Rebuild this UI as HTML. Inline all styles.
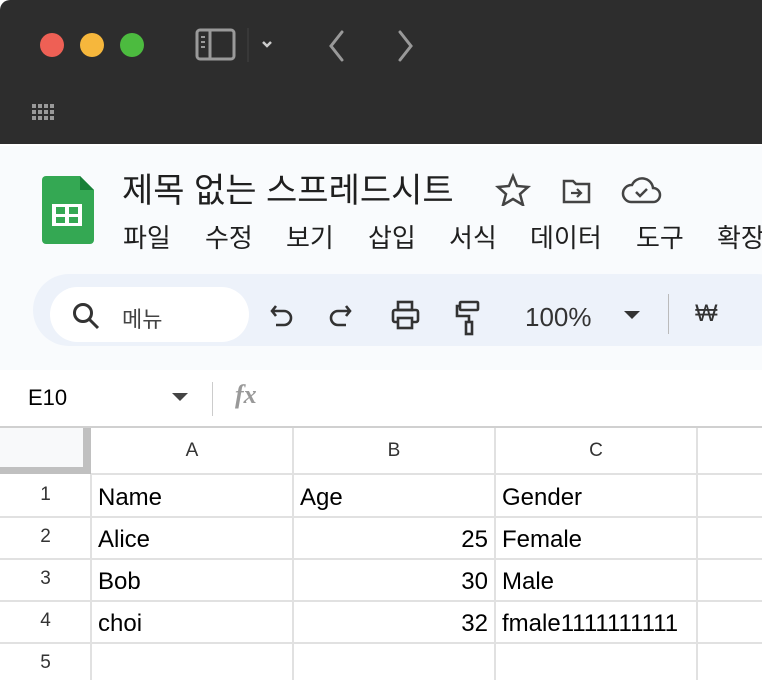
<!DOCTYPE html>
<html><head><meta charset="utf-8"><style>
html,body{margin:0;width:762px;height:680px;overflow:hidden}
body{background:#fff;font-family:"Liberation Sans","Noto Sans CJK KR",sans-serif;position:relative}
.abs{position:absolute;white-space:nowrap}
.top{left:0;top:0;width:762px;height:144px;background:#2d2d2d;border-top-left-radius:10px}
.dot{width:24px;height:24px;border-radius:50%;top:33px}
.app{left:0;top:146px;width:762px;height:224px;background:#f9fbfd}
.title{left:122px;top:163px;font-size:34px;color:#1f1f1f}
.menu{top:218px;font-size:26px;color:#1f1f1f}
.pill{left:33px;top:274px;width:760px;height:72px;background:#edf2fa;border-radius:36px}
.search{left:50px;top:287px;width:199px;height:55px;background:#fff;border-radius:28px}
.vl{width:2px;background:#e1e1e1;top:428px;height:252px}
.hl{height:2px;background:#e1e1e1;left:0;width:762px}
.c{font-size:24px;color:#000}
.rn{font-size:19px;color:#333;width:91px;text-align:center;left:0}
.ch{font-size:19px;color:#333;top:440px;width:202px;text-align:center}
</style></head><body>
<div class="abs top"></div>
<div class="abs dot" style="left:40px;background:#ee6055"></div>
<div class="abs dot" style="left:80px;background:#f6b73c"></div>
<div class="abs dot" style="left:120px;background:#4cbb3f"></div>
<svg class="abs" style="left:190px;top:28px" width="100" height="36" viewBox="0 0 100 36">
<rect x="7" y="2" width="37" height="29" rx="3" fill="none" stroke="#9a9a9a" stroke-width="3"/>
<line x1="20" y1="2" x2="20" y2="31" stroke="#9a9a9a" stroke-width="3"/>
<line x1="11" y1="9" x2="15" y2="9" stroke="#9a9a9a" stroke-width="2"/><line x1="11" y1="14" x2="15" y2="14" stroke="#9a9a9a" stroke-width="2"/><line x1="11" y1="19" x2="15" y2="19" stroke="#9a9a9a" stroke-width="2"/>
<line x1="58" y1="0" x2="58" y2="34" stroke="#444" stroke-width="1"/>
<path d="M73 14l4 4 4-4" fill="none" stroke="#ccc" stroke-width="2.5"/>
</svg>
<svg class="abs" style="left:320px;top:28px" width="100" height="36"><path d="M22 4L11 18l11 14" fill="none" stroke="#999" stroke-width="3" stroke-linecap="round"/><path d="M80 4l11 14-11 14" fill="none" stroke="#999" stroke-width="3" stroke-linecap="round"/></svg>
<svg class="abs" style="left:32px;top:104px" width="26" height="20"><g fill="#999"><rect x="0" y="0" width="4" height="4"/><rect x="6" y="0" width="4" height="4"/><rect x="12" y="0" width="4" height="4"/><rect x="18" y="0" width="4" height="4"/><rect x="0" y="6" width="4" height="4"/><rect x="6" y="6" width="4" height="4"/><rect x="12" y="6" width="4" height="4"/><rect x="18" y="6" width="4" height="4"/><rect x="0" y="12" width="4" height="4"/><rect x="6" y="12" width="4" height="4"/><rect x="12" y="12" width="4" height="4"/><rect x="18" y="12" width="4" height="4"/></g></svg>
<div class="abs app"></div>
<svg class="abs" style="left:42px;top:176px" width="52" height="68"><path d="M4 0h34l14 14v50a4 4 0 0 1-4 4H4a4 4 0 0 1-4-4V4a4 4 0 0 1 4-4z" fill="#34a853"/><path d="M38 0l14 14H38z" fill="#188038"/><rect x="10" y="28" width="30" height="22" fill="#fff"/><rect x="14" y="31" width="9" height="7" fill="#34a853"/><rect x="27" y="31" width="9" height="7" fill="#34a853"/><rect x="14" y="41" width="9" height="6" fill="#34a853"/><rect x="27" y="41" width="9" height="6" fill="#34a853"/></svg>
<div class="abs title">제목 없는 스프레드시트</div>
<svg class="abs" style="left:495px;top:172px" width="180" height="34"><path d="M18 4l4 10 11 1-8 7 3 11-10-6-10 6 3-11-8-7 11-1z" fill="none" stroke="#444" stroke-width="2.5"/><path d="M69 9h9l3 3h13v18H69z" fill="none" stroke="#444" stroke-width="2.5"/><path d="M76 21h10m-4-4l4 4-4 4" fill="none" stroke="#444" stroke-width="2.2"/><path d="M136 30h22a7 7 0 0 0 0-14 11 11 0 0 0-21-3 8 8 0 0 0-1 17z" fill="none" stroke="#444" stroke-width="2.5"/><path d="M141 20l4 4 7-7" fill="none" stroke="#444" stroke-width="2.5"/></svg>
<div class="abs menu" style="left:123px">파일</div>
<div class="abs menu" style="left:205px">수정</div>
<div class="abs menu" style="left:286px">보기</div>
<div class="abs menu" style="left:368px">삽입</div>
<div class="abs menu" style="left:449px">서식</div>
<div class="abs menu" style="left:530px">데이터</div>
<div class="abs menu" style="left:636px">도구</div>
<div class="abs menu" style="left:717px">확장</div>
<div class="abs pill"></div>
<div class="abs search"></div>
<svg class="abs" style="left:70px;top:300px" width="32" height="32"><circle cx="13" cy="13" r="8.5" fill="none" stroke="#333" stroke-width="3"/><line x1="19" y1="19" x2="28" y2="28" stroke="#333" stroke-width="3"/></svg>
<div class="abs" style="left:122px;top:302px;font-size:22px;color:#444">메뉴</div>
<svg class="abs" style="left:268px;top:298px" width="170" height="40"><path d="M8 8l-4 5 4 5M4 13h12a7 7 0 0 1 0 14H8" fill="none" stroke="#333" stroke-width="2.6"/><path d="M78 8l4 5-4 5M82 13H70a7 7 0 0 0 0 14h8" fill="none" stroke="#333" stroke-width="2.6"/><rect x="130" y="4" width="14" height="8" fill="none" stroke="#333" stroke-width="2.6"/><rect x="125" y="12" width="25" height="12" rx="2" fill="none" stroke="#333" stroke-width="2.6"/><rect x="130" y="20" width="14" height="10" fill="#edf2fa" stroke="#333" stroke-width="2.6"/></svg>
<svg class="abs" style="left:455px;top:300px" width="30" height="40"><rect x="5" y="2" width="18" height="8" rx="1" fill="none" stroke="#333" stroke-width="2.6"/><path d="M5 6H2v10h12v6" fill="none" stroke="#333" stroke-width="2.6"/><rect x="11" y="22" width="6" height="12" fill="none" stroke="#333" stroke-width="2.6"/></svg>
<div class="abs" style="left:525px;top:302px;font-size:26px;color:#333">100%</div>
<svg class="abs" style="left:624px;top:311px" width="16" height="10"><path d="M0 0h16L8 8z" fill="#333"/></svg>
<div class="abs" style="left:668px;top:294px;width:1px;height:40px;background:#bbb"></div>
<div class="abs" style="left:695px;top:300px;font-size:24px;color:#333">₩</div>
<div class="abs" style="left:28px;top:385px;font-size:22px;color:#000">E10</div>
<svg class="abs" style="left:172px;top:393px" width="16" height="10"><path d="M0 0h16L8 8z" fill="#444"/></svg>
<div class="abs" style="left:212px;top:382px;width:1px;height:34px;background:#ccc"></div>
<div class="abs" style="left:235px;top:380px;font-size:26px;color:#999;font-style:italic;font-weight:bold;font-family:'Liberation Serif',serif">fx</div>
<div class="abs" style="left:0;top:426px;width:762px;height:2px;background:#d0d0d0"></div>
<div class="abs" style="left:0;top:428px;width:83px;height:39px;background:#f8f9fa"></div>
<div class="abs vl" style="left:292px"></div>
<div class="abs vl" style="left:494px"></div>
<div class="abs vl" style="left:696px"></div>
<div class="abs vl" style="left:90px;top:474px;height:206px"></div>
<div class="abs hl" style="top:473px;left:91px"></div>
<div class="abs hl" style="top:516px"></div>
<div class="abs hl" style="top:558px"></div>
<div class="abs hl" style="top:600px"></div>
<div class="abs hl" style="top:642px"></div>
<div class="abs" style="left:83px;top:428px;width:8px;height:46px;background:#c0c0c0"></div>
<div class="abs" style="left:0;top:467px;width:91px;height:7px;background:#c0c0c0"></div>
<div class="abs ch" style="left:91px">A</div>
<div class="abs ch" style="left:293px">B</div>
<div class="abs ch" style="left:495px">C</div>
<div class="abs rn" style="top:484px">1</div>
<div class="abs rn" style="top:526px">2</div>
<div class="abs rn" style="top:568px">3</div>
<div class="abs rn" style="top:610px">4</div>
<div class="abs rn" style="top:652px">5</div>
<div class="abs c" style="left:98px;top:484px">Name</div>
<div class="abs c" style="left:300px;top:484px">Age</div>
<div class="abs c" style="left:502px;top:484px">Gender</div>
<div class="abs c" style="left:98px;top:526px">Alice</div>
<div class="abs c" style="left:300px;top:526px;width:188px;text-align:right">25</div>
<div class="abs c" style="left:502px;top:526px">Female</div>
<div class="abs c" style="left:98px;top:568px">Bob</div>
<div class="abs c" style="left:300px;top:568px;width:188px;text-align:right">30</div>
<div class="abs c" style="left:502px;top:568px">Male</div>
<div class="abs c" style="left:98px;top:610px">choi</div>
<div class="abs c" style="left:300px;top:610px;width:188px;text-align:right">32</div>
<div class="abs c" style="left:502px;top:610px">fmale1111111111</div>
</body></html>
